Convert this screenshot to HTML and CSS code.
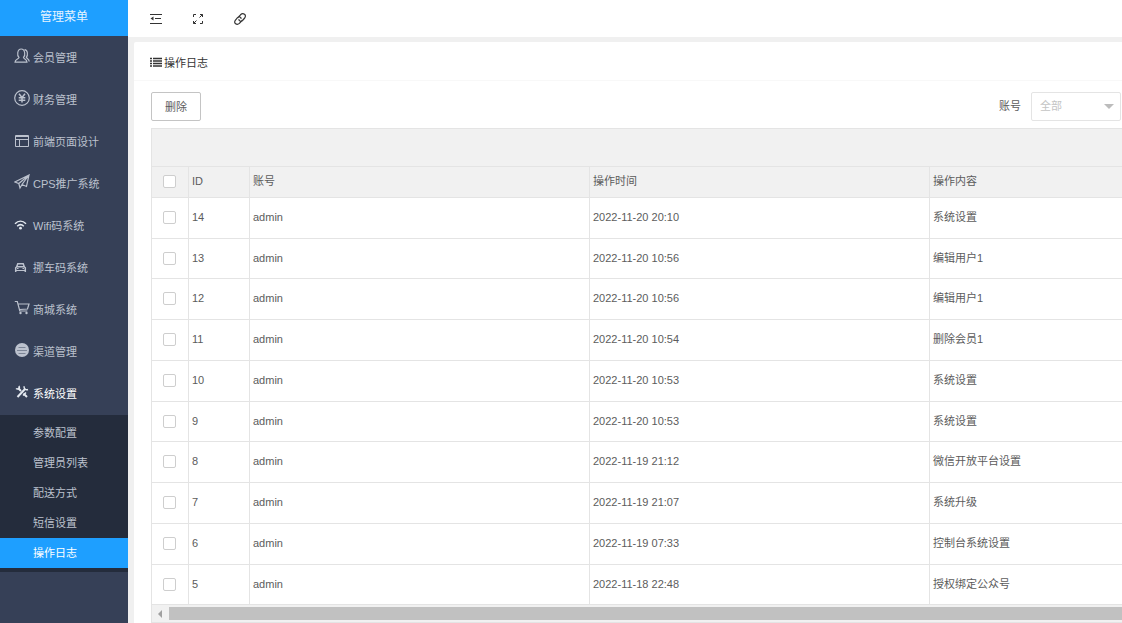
FILE: index.html
```html
<!DOCTYPE html>
<html lang="zh-CN">
<head>
<meta charset="utf-8">
<title>操作日志</title>
<link rel="stylesheet" href="styles.css">
</head>
<body>
<div class="app">
  <aside class="side">
    <h1 class="brand">管理菜单</h1>
    <nav class="menu">
      <a class="item" href="#"><svg class="icon" viewBox="0 0 16 16"><path class="medium" d="M5 9.500C2.800 7.500 3.200 1 7.200 1s4.400 6.500 2.300 8.500c.3 1.700 3.500 1.500 3.500 4.700H1c0-3.200 3.700-3 4-4.700zM10.500 1.600c3.300.2 3.700 5.600 1.800 7.700.4 1.200 2.900 1.700 2.900 4.200"/></svg>会员管理</a>
      <a class="item" href="#"><svg class="icon" viewBox="0 0 16 16"><circle class="medium" cx="8" cy="8" r="7.300"/><path class="bold" d="M5 3.800l3 3.700 3-3.700M8 7.500v5M4.700 7.800h6.600M4.700 10.200h6.600"/></svg>财务管理</a>
      <a class="item" href="#"><svg class="icon" viewBox="0 0 16 16"><path d="M1.500 3.500h13v11h-13zM1.500 7.500h13M5.500 7.500v7M1.500 4.500h13"/></svg>前端页面设计</a>
      <a class="item" href="#"><svg class="icon" viewBox="0 0 16 16"><path class="medium" d="M15 1L.8 8l4 1.500L15 1l-2.500 11.500-4.500-2L15 1M4.800 9.500L6 14l2-3.500"/></svg>CPS推广系统</a>
      <a class="item" href="#"><svg class="icon light" viewBox="0 0 16 16"><path class="bold" d="M1 7.700c3.300-3.200 7.700-3.200 11 0M3.200 10.200c2-1.900 4.600-1.900 6.600 0"/><circle class="fill" cx="6.500" cy="12.200" r="1.400"/></svg>Wifi码系统</a>
      <a class="item" href="#"><svg class="icon" viewBox="0 0 16 16"><path class="bold" d="M2.600 9l1.200-3.300h5.400L10.400 9M1.700 14V9.800l1-1h7.600l1 1V14"/><path d="M1 12.500h11M3 10.500h1.500M8.500 10.500H10"/></svg>挪车码系统</a>
      <a class="item" href="#"><svg class="icon" viewBox="0 0 16 16"><path class="medium" d="M.8 1.500h2.500l2.500 9.500h7.500M4 4h11l-1.500 5-8 .500"/><circle class="fill" cx="6.500" cy="13" r="1.200"/><circle class="fill" cx="12.500" cy="13" r="1.200"/></svg>商城系统</a>
      <a class="item" href="#"><svg class="icon" viewBox="0 0 16 16"><circle class="fill" cx="8" cy="8" r="7"/><path class="cut" d="M4.500 5.500h7M3 8.500h10M4.500 11.500h7"/></svg>渠道管理</a>
      <a class="item open" href="#"><svg class="icon light" viewBox="0 0 16 16"><path class="thick" d="M4 4l3 3M9.500 9.500l3.500 3.500M3.500 13l7.500-8"/><path class="bold" d="M2 4.500c2 1.500 4.200-.4 3-2.700M10.200 2.200c-.6 2.300 1.500 4.200 3.800 3.300M9 11.500l3-3"/></svg>系统设置</a>
      <div class="sub">
        <a class="subitem" href="#">参数配置</a>
        <a class="subitem" href="#">管理员列表</a>
        <a class="subitem" href="#">配送方式</a>
        <a class="subitem" href="#">短信设置</a>
        <a class="subitem current" href="#">操作日志</a>
      </div>
    </nav>
  </aside>
  <div class="main">
    <header class="topbar">
      <button class="tool" aria-label="收起菜单"><svg viewBox="0 0 14 14"><path d="M1 2.500h12M6 6.500h6M1 11.500h12"/><path class="solid" d="M4.500 4.500v4L1.500 6.500z"/></svg></button>
      <button class="tool" aria-label="全屏"><svg viewBox="0 0 14 14"><path d="M2.500 5V2.500H5M9 2.500h2.500V5M11.500 9v2.500H9M5 11.500H2.500V9M11.500 2.500l-3 3M2.500 11.500l3-3"/></svg></button>
      <button class="tool" aria-label="链接"><svg viewBox="0 0 14 14"><path class="medium" d="M5 5.500l2.500-2.700c2.700-2.500 6.500.2 4.200 3.200L9.500 8.500C8 10 5.500 9 6 7M9 8.500l-2.600 2.900c-2.500 2.200-6.200-.2-4.100-3.100L4.500 5.700C6 4.200 8.500 5 8 7"/></svg></button>
    </header>
    <section class="card">
      <h2 class="title"><svg viewBox="0 0 12 10"><path d="M0 1.500h2M3 1.500h9M0 4h2M3 4h9M0 6.500h2M3 6.500h9M0 9h2M3 9h9"/></svg>操作日志</h2>
      <div class="content">
        <form class="filters">
          <button class="delete" type="button">删除</button>
          <label class="label" for="account">账号</label>
          <div class="picker">
            <select id="account"><option>全部</option></select>
          </div>
        </form>
        <div class="grid">
          <div class="gridbar"></div>
          <table>
            <colgroup><col class="c-check"><col class="c-id"><col class="c-wide"><col class="c-wide"><col></colgroup>
            <thead>
              <tr><th><input type="checkbox" aria-label="全选"></th><th>ID</th><th>账号</th><th>操作时间</th><th>操作内容</th></tr>
            </thead>
            <tbody>
              <tr><td><input type="checkbox" aria-label="选择 14"></td><td>14</td><td>admin</td><td>2022-11-20 20:10</td><td>系统设置</td></tr>
              <tr><td><input type="checkbox" aria-label="选择 13"></td><td>13</td><td>admin</td><td>2022-11-20 10:56</td><td>编辑用户1</td></tr>
              <tr><td><input type="checkbox" aria-label="选择 12"></td><td>12</td><td>admin</td><td>2022-11-20 10:56</td><td>编辑用户1</td></tr>
              <tr><td><input type="checkbox" aria-label="选择 11"></td><td>11</td><td>admin</td><td>2022-11-20 10:54</td><td>删除会员1</td></tr>
              <tr><td><input type="checkbox" aria-label="选择 10"></td><td>10</td><td>admin</td><td>2022-11-20 10:53</td><td>系统设置</td></tr>
              <tr><td><input type="checkbox" aria-label="选择 9"></td><td>9</td><td>admin</td><td>2022-11-20 10:53</td><td>系统设置</td></tr>
              <tr><td><input type="checkbox" aria-label="选择 8"></td><td>8</td><td>admin</td><td>2022-11-19 21:12</td><td>微信开放平台设置</td></tr>
              <tr><td><input type="checkbox" aria-label="选择 7"></td><td>7</td><td>admin</td><td>2022-11-19 21:07</td><td>系统升级</td></tr>
              <tr><td><input type="checkbox" aria-label="选择 6"></td><td>6</td><td>admin</td><td>2022-11-19 07:33</td><td>控制台系统设置</td></tr>
              <tr><td><input type="checkbox" aria-label="选择 5"></td><td>5</td><td>admin</td><td>2022-11-18 22:48</td><td>授权绑定公众号</td></tr>
            </tbody>
          </table>
          <div class="scroll"><span class="arrow"></span><span class="thumb"></span></div>
        </div>
      </div>
    </section>
  </div>
</div>
</body>
</html>
```

FILE: styles.css
```css
* { box-sizing: border-box; }
body {
  margin: 0;
  overflow: hidden;
  background: #f0f0f0;
  color: #5c5c5c;
  font: 11px/16px "Liberation Sans", "Noto Sans CJK SC", sans-serif;
}
a { color: inherit; text-decoration: none; }
h1, h2 { margin: 0; font-weight: 400; }
button, select { font: inherit; color: inherit; }
svg { fill: none; stroke: currentColor; }

.app { display: flex; min-height: 100vh; }

.side { flex: none; width: 128px; background: #364057; color: #bcc2ce; }
.brand {
  background: #1e9fff;
  color: #e6f4ff;
  font-size: 12px;
  line-height: 34px;
  padding-bottom: 2px;
  text-align: center;
}
.menu { padding-top: 1px; }
.item { display: flex; align-items: center; gap: 3px; height: 42px; padding-left: 14px; }
.icon { width: 16px; height: 16px; margin-bottom: 4px; }
.light { color: #e4e9f0; }
.open { color: #fff; }
.medium { stroke-width: 1.2; }
.bold { stroke-width: 1.5; }
.thick { stroke-width: 2; }
.fill { fill: currentColor; stroke: none; }
.cut { stroke: #7c8596; }
.sub { padding: 3px 0 4px; background: #242c3c; }
.subitem { display: block; height: 30px; padding-left: 33px; line-height: 30px; }
.current { background: #1e9fff; color: #fff; }

.main { flex: 1; min-width: 0; display: flex; flex-direction: column; }
.topbar { display: flex; gap: 28px; align-items: center; height: 37px; padding-left: 21px; background: #fff; }
.tool { display: flex; padding: 0; border: 0; background: none; color: #333; }
.tool svg { width: 14px; height: 14px; }
.solid { fill: currentColor; stroke: none; }

.card { flex: 1; margin: 5px 0 0 6px; background: #fff; border-radius: 2px 0 0 0; }
.title {
  display: flex;
  align-items: center;
  gap: 2px;
  height: 39px;
  padding: 4px 0 0 16px;
  border-bottom: 1px solid #f8f8f8;
  color: #333;
  font-size: 11px;
}
.title svg { width: 12px; height: 10px; margin-bottom: 2px; }
.title path { stroke-width: 1.5; }
.content { padding: 11px 0 0 17px; }
.filters { display: flex; align-items: center; padding-right: 1px; }
.delete { width: 50px; height: 29px; padding: 0; border: 1px solid #c4c4c4; border-radius: 2px; background: #fff; }
.label { margin-left: auto; padding: 0 10px 2px 0; }
.picker { position: relative; }
.picker select {
  display: block;
  width: 90px;
  height: 29px;
  padding: 0 8px 2px;
  border: 1px solid #e4e4e4;
  border-radius: 2px;
  background: #fff;
  color: #c4c4c4;
  appearance: none;
}
.picker::after {
  content: "";
  position: absolute;
  right: 7px;
  top: 12px;
  border: 5px solid transparent;
  border-top-color: #bcbcbc;
  border-bottom: 0;
  pointer-events: none;
}

.grid { margin-top: 7px; border: 1px solid #e4e4e4; border-right: 0; }
.gridbar { height: 38px; background: #f1f1f1; border-bottom: 1px solid #e4e4e4; }
table { width: 100%; table-layout: fixed; border-collapse: separate; border-spacing: 0; }
.c-check { width: 37px; }
.c-id { width: 61px; }
.c-wide { width: 340px; }
th, td {
  height: 41px;
  padding: 0 3px 2px;
  border: solid #e4e4e4;
  border-width: 0 1px 1px 0;
  text-align: left;
  font-weight: 400;
}
th { height: 31px; background: #f1f1f1; }
th:last-child, td:last-child { border-right: 0; }
tbody tr:nth-child(4n+2) td { height: 40px; }
th:first-child, td:first-child { padding: 0 2px 1px 0; }
input {
  display: block;
  width: 13px;
  height: 13px;
  margin: 0 auto;
  border: 1px solid #cecece;
  border-radius: 2px;
  background: #fff;
  appearance: none;
}
.scroll { display: flex; align-items: center; height: 17px; background: #f1f1f1; }
.arrow { margin: 0 7px 0 6px; border: 4px solid transparent; border-left: 0; border-right-color: #a0a0a0; }
.thumb { flex: 1; height: 13px; background: #c1c1c1; }
```
